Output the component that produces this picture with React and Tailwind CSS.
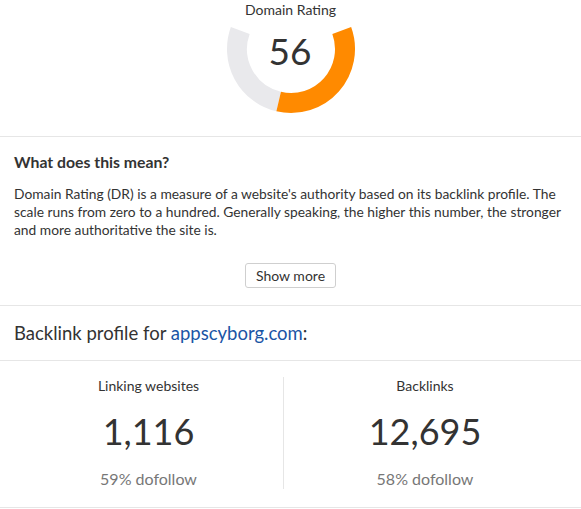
import React from 'react';

// gauge geometry: 220deg arc, gap at the top
const CX = 65;
const CY = 29;
const R = 54;

function pt(deg) {
    const a = (deg * Math.PI) / 180;
    return [CX + R * Math.cos(a), CY - R * Math.sin(a)];
}

function Gauge({ value }) {
    const start = 20;
    const split = start - (value / 100) * 220;
    const [x1, y1] = pt(start);
    const [x2, y2] = pt(split);
    const [x3, y3] = pt(160);
    return (
        <div className="relative w-[130px] h-[116px]">
            <svg width="130" height="116" viewBox="0 0 130 116" className="block">
                <path d={`M ${x2} ${y2} A ${R} ${R} 0 0 1 ${x3} ${y3}`} fill="none" stroke="#e9e9ec" strokeWidth="20" />
                <path d={`M ${x1} ${y1} A ${R} ${R} 0 0 1 ${x2} ${y2}`} fill="none" stroke="#ff8a00" strokeWidth="20" />
            </svg>
            <div className="absolute left-[-1px] right-0 top-[9px] text-center text-[37px] leading-[44px] text-[#333]">{value}</div>
        </div>
    );
}

function Stat({ label, value, sub }) {
    return (
        <div className="flex flex-col items-center">
            <div className="text-[14px] leading-[18px] text-[#333]">{label}</div>
            <div className="mt-[14px] text-[36px] leading-[44px] text-[#333]">{value}</div>
            <div className="mt-[16px] text-[16px] leading-[20px] text-[#777]">{sub}</div>
        </div>
    );
}

export default function App() {
    return (
        <div className="w-[581px] bg-white font-['Lato',sans-serif] text-[#333]">
            {/* Domain rating */}
            <div className="flex flex-col items-center border-b border-[#e6e6e6]">
                <div className="text-[14px] leading-[20px]">Domain Rating</div>
                <Gauge value={56} />
            </div>

            {/* Explanation */}
            <div className="px-[14px] pt-[15px] pb-[17px] border-b border-[#e6e6e6]">
                <h2 className="text-[15.8px] leading-[20px] font-bold">What does this mean?</h2>
                <p className="mt-[13px] text-[13.8px] leading-[18px]">
                    Domain Rating (DR) is a measure of a website's authority based on its backlink profile. The scale runs from zero to a hundred. Generally speaking, the higher this number, the stronger and more authoritative the site is.
                </p>
                <div className="mt-[24px] flex justify-center">
                    <button className="h-[25px] w-[91px] text-[14px] border border-[#cfcfcf] rounded-[3px] bg-white text-[#333]">Show more</button>
                </div>
            </div>

            {/* Backlink profile */}
            <div className="h-[55px] px-[14px] flex items-center border-b border-[#e6e6e6]">
                <h2 className="text-[18.5px] leading-[24px]">
                    Backlink profile for <span className="text-[#1a55a5]">appscyborg.com</span>:
                </h2>
            </div>

            <div className="pt-[16px] pb-[18px] border-b border-[#e6e6e6]">
                <div className="ml-[14px] grid grid-cols-[270px_282px]">
                    <div className="border-r border-[#e6e6e6]">
                        <Stat label="Linking websites" value="1,116" sub="59% dofollow" />
                    </div>
                    <Stat label="Backlinks" value="12,695" sub="58% dofollow" />
                </div>
            </div>
        </div>
    );
}
